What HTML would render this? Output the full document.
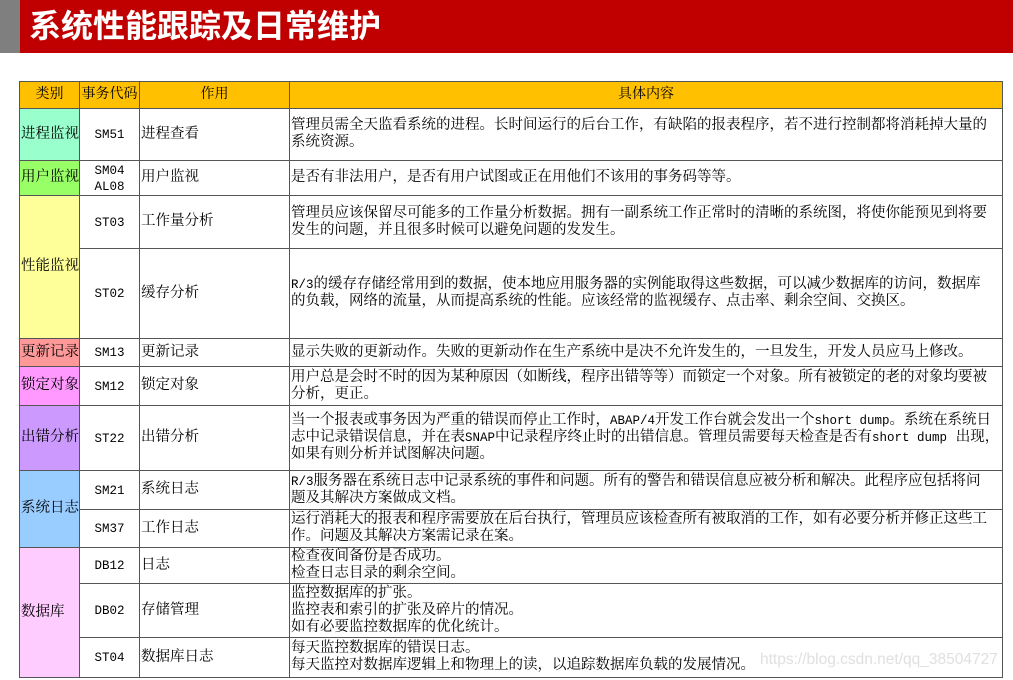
<!DOCTYPE html>
<html><head><meta charset="utf-8"><style>
body{margin:0;width:1013px;height:680px;background:#fff;position:relative;overflow:hidden;font-family:"Liberation Mono","Noto Serif CJK SC",serif;}
.gray{position:absolute;left:0;top:0;width:20px;height:53px;background:#7f7f7f}
.red{position:absolute;left:20px;top:0;width:993px;height:53px;background:#c00000;color:#fff;font-family:"Liberation Sans","Noto Sans CJK SC",sans-serif;font-weight:bold;font-size:32px;line-height:53px;padding-left:9px;box-sizing:border-box}
table{position:absolute;left:19px;top:81px;border-collapse:collapse;table-layout:fixed;width:983px;font-size:14.5px;line-height:17px;color:#000}
td{border:1px solid #555;padding:1px 1px 0 1px;overflow:hidden;white-space:nowrap}
td.c{text-align:center}
td.d{padding-left:1px}
.m{font-size:12.5px}
.cc{font-size:12.5px;line-height:16px}
.h td{background:#ffc000;text-align:center;font-size:14px}
.wm{position:absolute;left:760px;top:651px;color:#e0e0e0;font-family:"Liberation Sans",sans-serif;font-size:15.5px}
</style></head><body>
<div class="gray"></div><div class="red">系统性能跟踪及日常维护</div>
<table>
<colgroup><col style="width:60px"><col style="width:60px"><col style="width:150px"><col style="width:713px"></colgroup>
<tr class="h" style="height:27px"><td>类别</td><td>事务代码</td><td>作用</td><td>具体内容</td></tr>
<tr style="height:52px"><td style="background:#99ffcc">进程监视</td><td class="c cc">SM51</td><td>进程查看</td><td class="d">管理员需全天监看系统的进程。长时间运行的后台工作，有缺陷的报表程序，若不进行控制都将消耗掉大量的<br>系统资源。</td></tr>
<tr style="height:35px"><td style="background:#99ff66">用户监视</td><td class="c cc">SM04<br>AL08</td><td>用户监视</td><td class="d">是否有非法用户，是否有用户试图或正在用他们不该用的事务码等等。</td></tr>
<tr style="height:53px"><td rowspan="2" style="background:#ffff99">性能监视</td><td class="c cc">ST03</td><td>工作量分析</td><td class="d">管理员应该保留尽可能多的工作量分析数据。拥有一副系统工作正常时的清晰的系统图，将使你能预见到将要<br>发生的问题，并且很多时候可以避免问题的发发生。</td></tr>
<tr style="height:90px"><td class="c cc">ST02</td><td>缓存分析</td><td class="d"><span class="m">R/3</span>的缓存存储经常用到的数据，使本地应用服务器的实例能取得这些数据，可以减少数据库的访问，数据库<br>的负载，网络的流量，从而提高系统的性能。应该经常的监视缓存、点击率、剩余空间、交换区。</td></tr>
<tr style="height:28px"><td style="background:#ff9999">更新记录</td><td class="c cc">SM13</td><td>更新记录</td><td class="d">显示失败的更新动作。失败的更新动作在生产系统中是决不允许发生的，一旦发生，开发人员应马上修改。</td></tr>
<tr style="height:39px"><td style="background:#ff99ff">锁定对象</td><td class="c cc">SM12</td><td>锁定对象</td><td class="d">用户总是会时不时的因为某种原因（如断线，程序出错等等）而锁定一个对象。所有被锁定的老的对象均要被<br>分析，更正。</td></tr>
<tr style="height:65px"><td style="background:#cc99ff">出错分析</td><td class="c cc">ST22</td><td>出错分析</td><td class="d">当一个报表或事务因为严重的错误而停止工作时，<span class="m">ABAP/4</span>开发工作台就会发出一个<span class="m">short dump</span>。系统在系统日<br>志中记录错误信息，并在表<span class="m">SNAP</span>中记录程序终止时的出错信息。管理员需要每天检查是否有<span class="m">short dump</span> 出现，<br>如果有则分析并试图解决问题。</td></tr>
<tr style="height:39px"><td rowspan="2" style="background:#99ccff">系统日志</td><td class="c cc">SM21</td><td>系统日志</td><td class="d"><span class="m">R/3</span>服务器在系统日志中记录系统的事件和问题。所有的警告和错误信息应被分析和解决。此程序应包括将问<br>题及其解决方案做成文档。</td></tr>
<tr style="height:38px"><td class="c cc">SM37</td><td>工作日志</td><td class="d">运行消耗大的报表和程序需要放在后台执行，管理员应该检查所有被取消的工作，如有必要分析并修正这些工<br>作。问题及其解决方案需记录在案。</td></tr>
<tr style="height:36px"><td rowspan="3" style="background:#ffccff">数据库</td><td class="c cc">DB12</td><td>日志</td><td class="d">检查夜间备份是否成功。<br>检查日志目录的剩余空间。</td></tr>
<tr style="height:54px"><td class="c cc">DB02</td><td>存储管理</td><td class="d">监控数据库的扩张。<br>监控表和索引的扩张及碎片的情况。<br>如有必要监控数据库的优化统计。</td></tr>
<tr style="height:40px"><td class="c cc">ST04</td><td>数据库日志</td><td class="d">每天监控数据库的错误日志。<br>每天监控对数据库逻辑上和物理上的读，以追踪数据库负载的发展情况。</td></tr>
</table>
<div class="wm">https://blog.csdn.net/qq_38504727</div>
</body></html>
